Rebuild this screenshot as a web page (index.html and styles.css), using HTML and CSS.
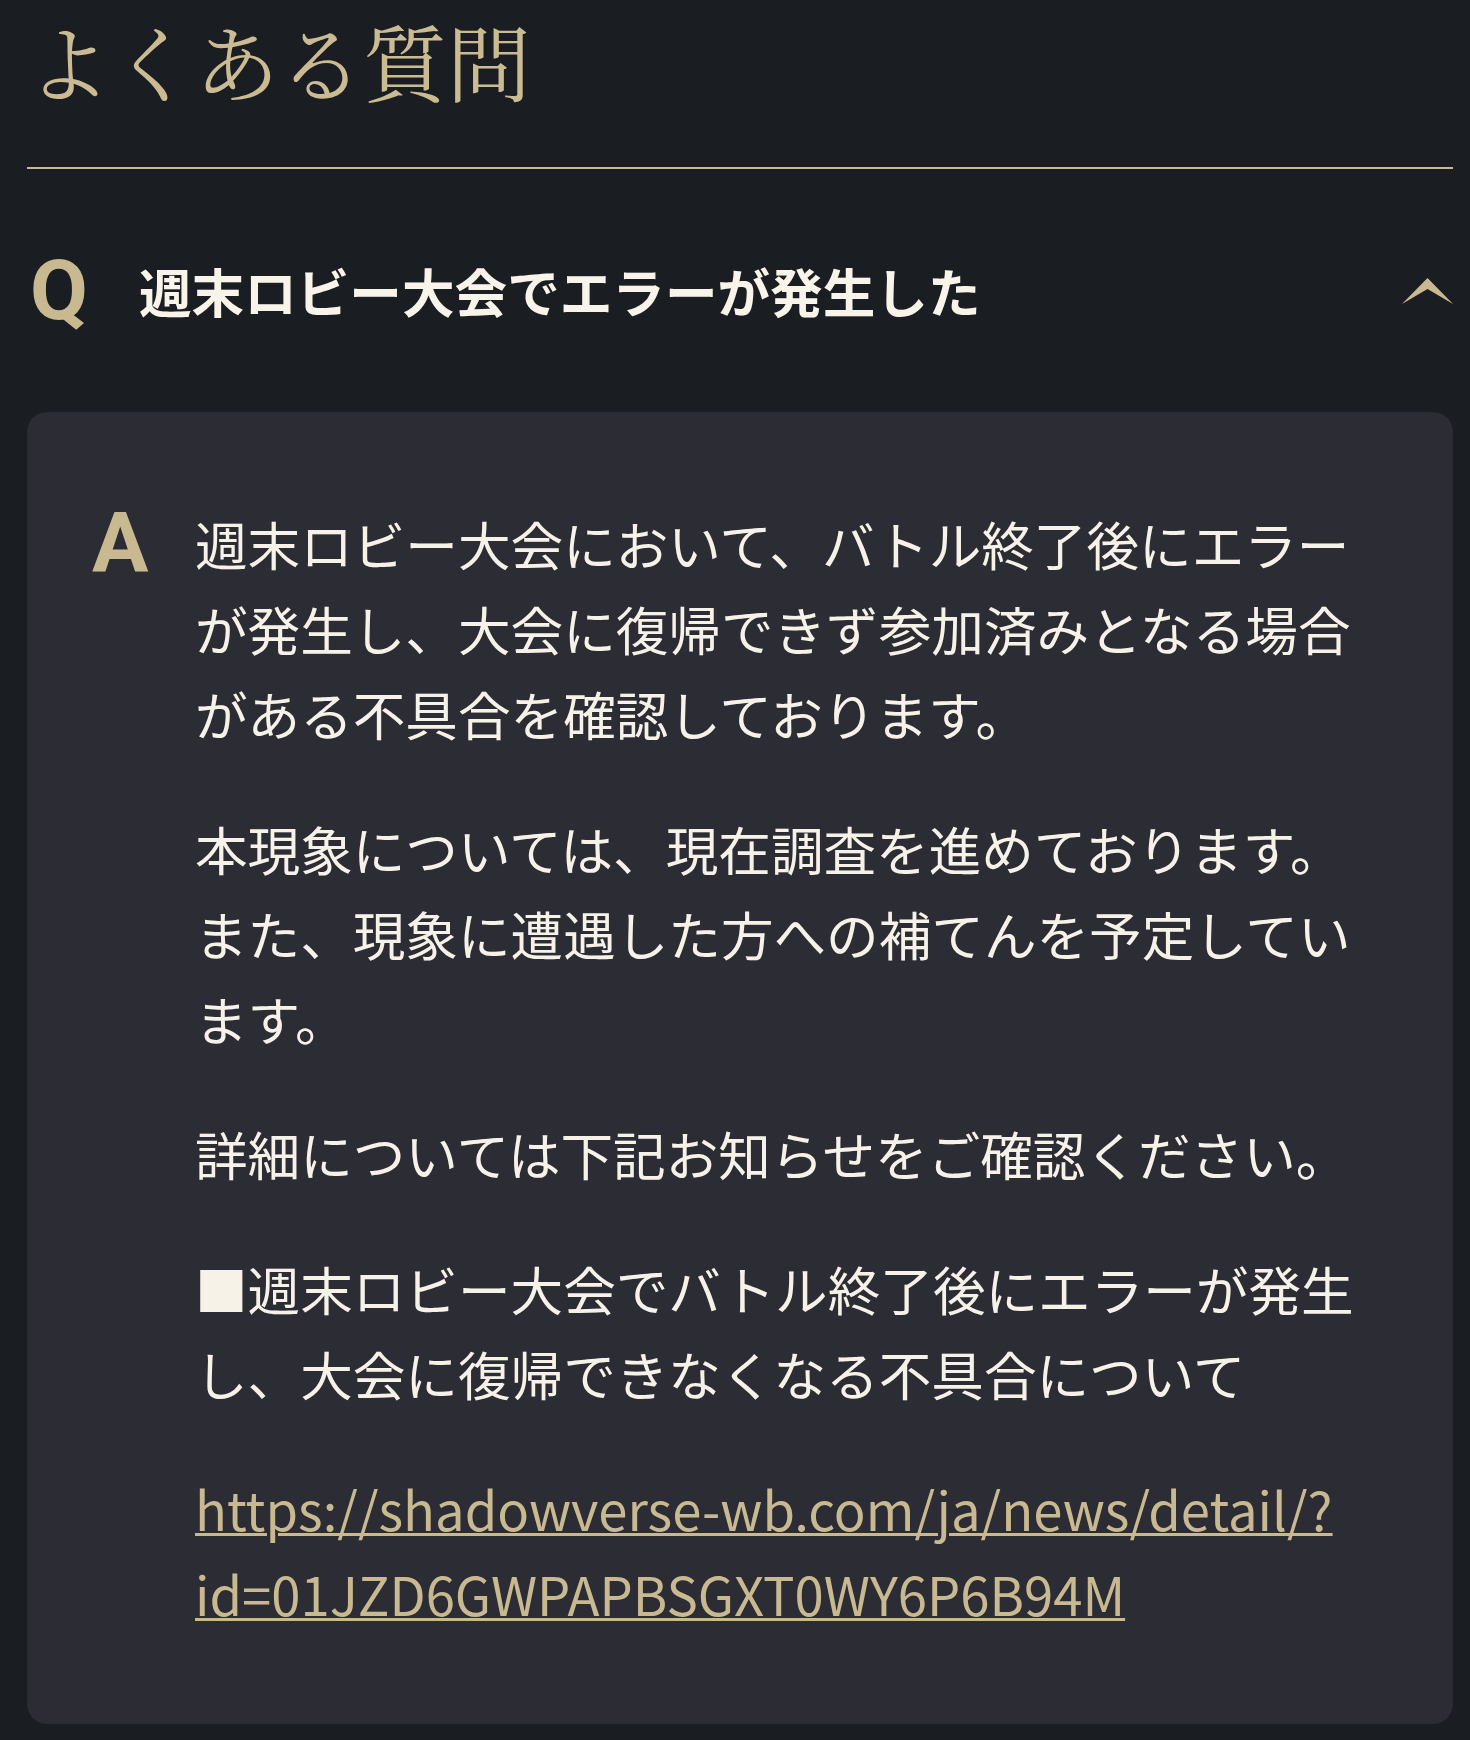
FILE: index.html
```html
<!DOCTYPE html>
<html lang="ja">
<head>
<meta charset="utf-8">
<title>よくある質問</title>
<link rel="stylesheet" href="styles.css">
</head>
<body>
<main class="faq">
  <h1 class="faq-title">よくある質問</h1>
  <section class="faq-item">
    <div class="question">
      <span class="q-mark">Q</span>
      <h2 class="q-text">週末ロビー大会でエラーが発生した</h2>
      <svg class="chevron" viewBox="0 0 51 26" width="51" height="26" aria-hidden="true">
        <path d="M0 26 L25.5 0 L51 26 L25.5 11 Z" fill="#c9b990"/>
      </svg>
    </div>
    <div class="answer">
      <span class="a-mark">A</span>
      <div class="a-body">
        <p>週末ロビー大会において、バトル終了後にエラーが発生し、大会に復帰できず参加済みとなる場合がある不具合を確認しております。</p>
        <p>本現象については、現在調査を進めております。また、現象に遭遇した方への補てんを予定しています。</p>
        <p>詳細については下記お知らせをご確認ください。</p>
        <p>■週末ロビー大会でバトル終了後にエラーが発生し、大会に復帰できなくなる不具合について</p>
        <p><a class="a-link" href="#">https://shadowverse-wb.com/ja/news/detail/?id=01JZD6GWPAPBSGXT0WY6P6B94M</a></p>
      </div>
    </div>
  </section>
</main>
</body>
</html>
```

FILE: styles.css
```css
html, body {
  margin: 0;
  padding: 0;
  background: #1a1d22;
}

body {
  font-family: "Noto Sans CJK JP", "Noto Sans", sans-serif;
  color: #f7f2e8;
}

.faq {
  padding: 0 17px 17px 27px;
}

.faq-title {
  margin: 0;
  padding: 0 0 47px 0;
  font-family: "Noto Serif CJK JP", "Noto Serif JP", "IPAexMincho", serif;
  font-weight: 400;
  font-size: 84px;
  line-height: 120px;
  color: #cbbb93;
  border-bottom: 2px solid #c9b990;
}

.question {
  display: flex;
  align-items: center;
  padding: 70px 0;
}

.q-mark {
  width: 112px;
  flex: none;
  font-family: "Roboto", "Liberation Sans", sans-serif;
  font-weight: 700;
  font-size: 84px;
  line-height: 103px;
  color: #c9b990;
  padding-left: 3px;
  box-sizing: border-box;
}

.q-text {
  margin: 0;
  font-size: 52.6px;
  font-weight: 700;
  line-height: 1.4;
  color: #f9f4ea;
}

.chevron {
  margin-left: auto;
  flex: none;
  display: block;
}

.answer {
  display: flex;
  background: #2b2c34;
  border-radius: 20px;
  padding: 89px 80px 88px 63px;
}

.a-mark {
  width: 105px;
  flex: none;
  font-family: "Roboto", "Liberation Sans", sans-serif;
  font-weight: 700;
  font-size: 84px;
  line-height: 85px;
  color: #c9b990;
  padding-left: 2px;
  box-sizing: border-box;
}

.a-body {
  width: 1180px;
  font-size: 52.6px;
  line-height: 85px;
}

.a-body p {
  margin: 0 0 50px;
}

.a-body p:last-child {
  margin-bottom: 0;
}

.a-link {
  color: #c9b990;
  text-decoration: underline;
  text-decoration-thickness: 3px;
  overflow-wrap: anywhere;
}
```
